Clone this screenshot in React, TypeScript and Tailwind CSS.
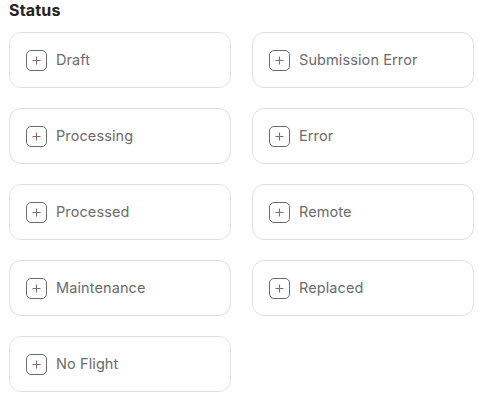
import React from "react";

const items = [
  "Draft",
  "Submission Error",
  "Processing",
  "Error",
  "Processed",
  "Remote",
  "Maintenance",
  "Replaced",
  "No Flight",
];

export default function App() {
  return (
    <div
      className="w-[484px] h-[401px] bg-white pl-[9px] pt-0"
      style={{ fontFamily: "Inter, 'Noto Sans', sans-serif" }}
    >
      <div className="text-[16px] font-bold text-[#222222] leading-[20px] tracking-[0.2px]">Status</div>
      <div className="grid grid-cols-[222px_222px] gap-x-[21px] gap-y-[20px] mt-[12px]">
        {items.map((t) => (
          <div
            key={t}
            className="h-[56px] rounded-[12px] border border-[#e0e0e0] flex items-center pl-4 gap-[9px]"
          >
            <div className="w-[21px] h-[21px] rounded-[5px] border border-[#6b6b6b] flex items-center justify-center">
              <svg width="9" height="9" viewBox="0 0 9 9">
                <path d="M4.5 0.5v8M0.5 4.5h8" stroke="#8a6a5e" strokeWidth="1.1" />
              </svg>
            </div>
            <span className="text-[14.5px] text-[#6b6b6b] tracking-[0.1px]">{t}</span>
          </div>
        ))}
      </div>
    </div>
  );
}
